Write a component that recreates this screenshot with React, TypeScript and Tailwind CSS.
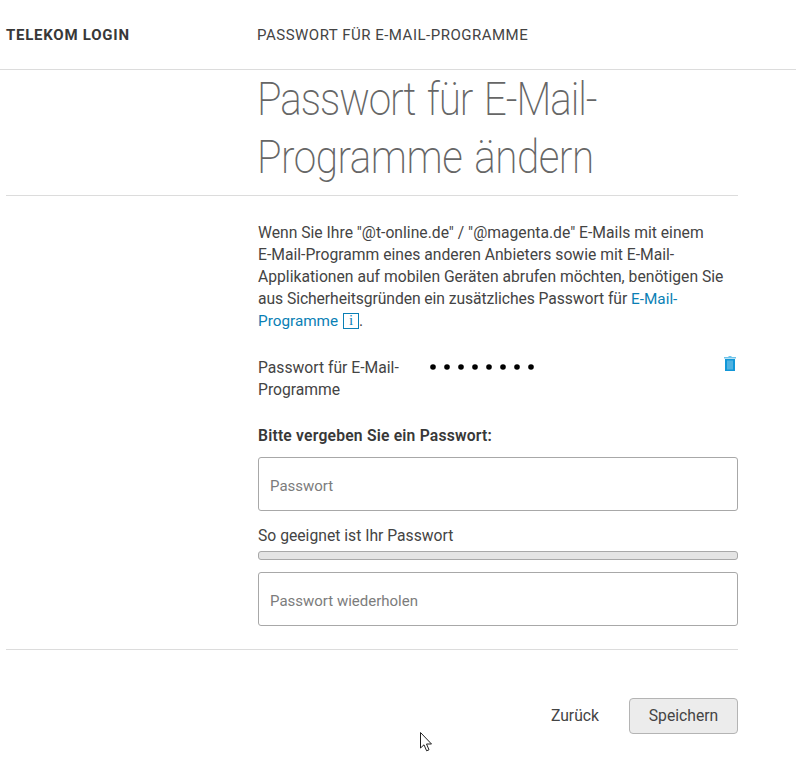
// Mouse pointer caught in the screenshot
function Cursor() {
  return (
    <svg className="absolute left-[420px] top-[732px]" width="13" height="20" viewBox="0 0 13 20" aria-hidden="true">
      <path d="M0.5 0.5 V16 L4 12.8 L6.6 18.8 L9 17.8 L6.5 12 H11.5 Z" fill="#fff" stroke="#222" strokeWidth="1" />
    </svg>
  );
}

function TrashIcon() {
  return (
    <svg width="12" height="15" viewBox="0 0 12 15" aria-hidden="true">
      <path d="M4.5 0h3v1H12v1.4H0V1h4.5z" fill="#6fc4ea" />
      <path d="M1 3h10v12H1z" fill="#1297d8" />
      <path d="M3.5 4.5h1v9h-1zM5.5 4.5h1v9h-1zM7.5 4.5h1v9h-1z" fill="#8ccdec" />
    </svg>
  );
}

export default function App() {
  return (
    <div className="relative h-[769px] overflow-hidden bg-white font-['Roboto',sans-serif] text-[15.7px] leading-[22px] text-[#444444]">
      {/* Top bar */}
      <header className="flex h-[70px] items-center border-b border-[#dcdcdc] pl-[6px]">
        <div className="w-[251px] text-[15px] font-bold tracking-[0.75px] text-[#383838]">TELEKOM LOGIN</div>
        <div className="text-[15px] tracking-[0.5px]">PASSWORT FÜR E-MAIL-PROGRAMME</div>
      </header>

      <main className="ml-[6px] w-[732px]">
        <h1 className="border-b border-[#dcdcdc] pb-[9px] pl-[251px] text-[46px] leading-[58px] font-extralight text-[#666666]">
          <span className="block origin-left scale-x-[0.88] tracking-[-1.2px] whitespace-nowrap [word-spacing:3px]">
            Passwort für E-Mail-
            <br />
            <span className="tracking-[-0.55px]">Programme ändern</span>
          </span>
        </h1>

        <div className="pl-[252px]">
          <p className="mt-[26px]">
            Wenn Sie Ihre "@t-online.de" / "@magenta.de" E-Mails mit einem
            <br />
            E-Mail-Programm eines anderen Anbieters sowie mit E-Mail-Applikationen auf mobilen Geräten abrufen möchten, benötigen Sie{' '}
            <span className="tracking-[-0.07px]">aus Sicherheitsgründen ein zusätzliches Passwort für</span>{' '}
            <a className="text-[15.3px] text-[#0a7fb5]">E-Mail-Programme</a>{' '}
            <span className="ml-[1px] inline-flex h-[16px] w-[16px] items-center justify-center border border-[#0a7fb5] align-[1px] font-['Liberation_Serif',serif] text-[15px] leading-none text-[#0a7fb5]">i</span>.
          </p>

          <div className="mt-[25px] flex">
            <div className="w-[172px]">Passwort für E-Mail-Programme</div>
            <div className="flex flex-1 items-start justify-between">
              <div className="ml-[-1px] flex gap-[6px] pt-[6px]">
                {[0, 1, 2, 3, 4, 5, 6, 7].map((i) => (
                  <span key={i} className="h-[8px] w-[8px] scale-[0.7] rounded-full bg-black" />
                ))}
              </div>
              <div className="mr-[2px] mt-[-1px]">
                <TrashIcon />
              </div>
            </div>
          </div>

          <div className="mt-[24px] font-semibold tracking-[0.2px] text-[#383838]">Bitte vergeben Sie ein Passwort:</div>

          <input
            placeholder="Passwort"
            className="mt-[10px] block h-[54px] w-full rounded-[3px] border border-[#a8a8a8] bg-white px-[11px] pt-[4px] text-[15px] placeholder:text-[#7c7c7c] outline-none"
          />

          <div className="mt-[14px]">So geeignet ist Ihr Passwort</div>
          <div className="mt-[4px] h-[9px] rounded-[3px] border border-[#a8a8a8] bg-[#e4e4e4]" />

          <input
            placeholder="Passwort wiederholen"
            className="mt-[12px] block h-[54px] w-full rounded-[3px] border border-[#a8a8a8] bg-white px-[11px] pt-[4px] text-[15px] placeholder:text-[#7c7c7c] outline-none"
          />
        </div>

        <div className="mt-[23px] border-t border-[#dcdcdc]" />

        <div className="mt-[48px] flex items-center justify-end gap-[30px]">
          <button>Zurück</button>
          <button className="h-[36px] w-[109px] rounded-[4px] border border-[#b4b4b4] bg-[#ececec]">Speichern</button>
        </div>
      </main>

      <Cursor />
    </div>
  );
}
